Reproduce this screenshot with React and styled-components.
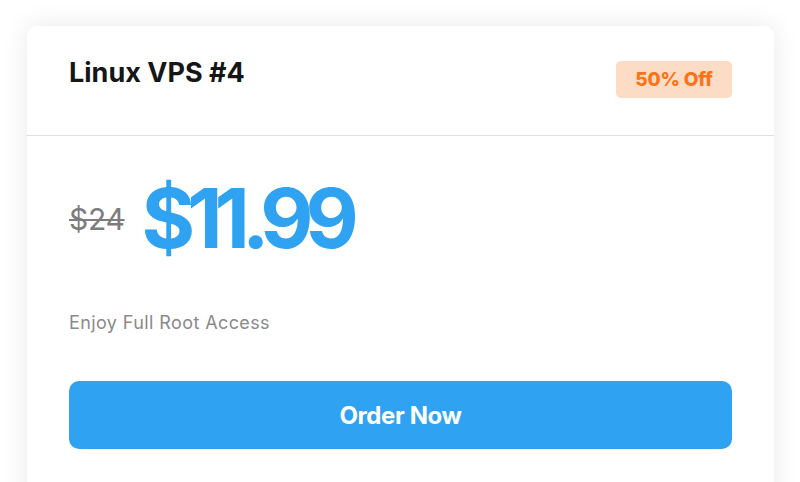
import React from 'react'
import styled, { createGlobalStyle } from 'styled-components'

const GlobalStyle = createGlobalStyle`
  html, body {
    margin: 0;
    padding: 0;
    background: #fff;
    font-family: Inter, "Noto Sans", sans-serif;
  }
  body {
    height: 482px;
    overflow: hidden;
  }
`

const Page = styled.div`
  padding: 26px 26px 0 27px;
`

const Card = styled.div`
  background: #fff;
  border-radius: 10px;
  box-shadow: 0 0 28px rgba(0, 0, 0, 0.09);
  height: 520px;
`

const Header = styled.div`
  display: flex;
  justify-content: space-between;
  align-items: flex-start;
  padding: 35px 42px 37px;
  border-bottom: 1px solid #dedede;
`

const Title = styled.h2`
  margin: 0;
  font-size: 27px;
  line-height: 23px;
  font-weight: 700;
  color: #161616;
`

const Badge = styled.span`
  display: flex;
  align-items: center;
  justify-content: center;
  width: 116px;
  height: 37px;
  border-radius: 5px;
  background: #fcdcc5;
  color: #fa7317;
  font-size: 19px;
  font-weight: 800;
  letter-spacing: -0.2px;
`

const Body = styled.div`
  padding: 42px 42px 0;
`

const PriceRow = styled.div`
  display: flex;
  align-items: center;
  gap: 17px;
`

const OldPrice = styled.span`
  font-size: 30px;
  line-height: 1;
  color: #7d7d7d;
  text-decoration: line-through;
  text-decoration-thickness: 2px;
  letter-spacing: -0.3px;
`

const Price = styled.span`
  font-size: 82px;
  line-height: 82px;
  font-weight: 700;
  color: #2fa3f1;
  letter-spacing: -8px;
`

const Note = styled.p`
  margin: 51px 0 0;
  font-size: 18px;
  line-height: 24px;
  letter-spacing: 0.4px;
  color: #8a8a8a;
`

const OrderButton = styled.button`
  display: block;
  width: 100%;
  height: 68px;
  margin-top: 46px;
  border: none;
  border-radius: 10px;
  background: #2fa3f1;
  color: #fff;
  font-family: inherit;
  font-size: 24px;
  font-weight: 700;
  letter-spacing: -0.4px;
  cursor: pointer;
`

export default function App() {
  return (
    <>
      <GlobalStyle />
      <Page>
        <Card>
          <Header>
            <Title>Linux VPS #4</Title>
            <Badge>50% Off</Badge>
          </Header>
          <Body>
            <PriceRow>
              <OldPrice>$24</OldPrice>
              <Price>$11.99</Price>
            </PriceRow>
            <Note>Enjoy Full Root Access</Note>
            <OrderButton>Order Now</OrderButton>
          </Body>
        </Card>
      </Page>
    </>
  )
}
